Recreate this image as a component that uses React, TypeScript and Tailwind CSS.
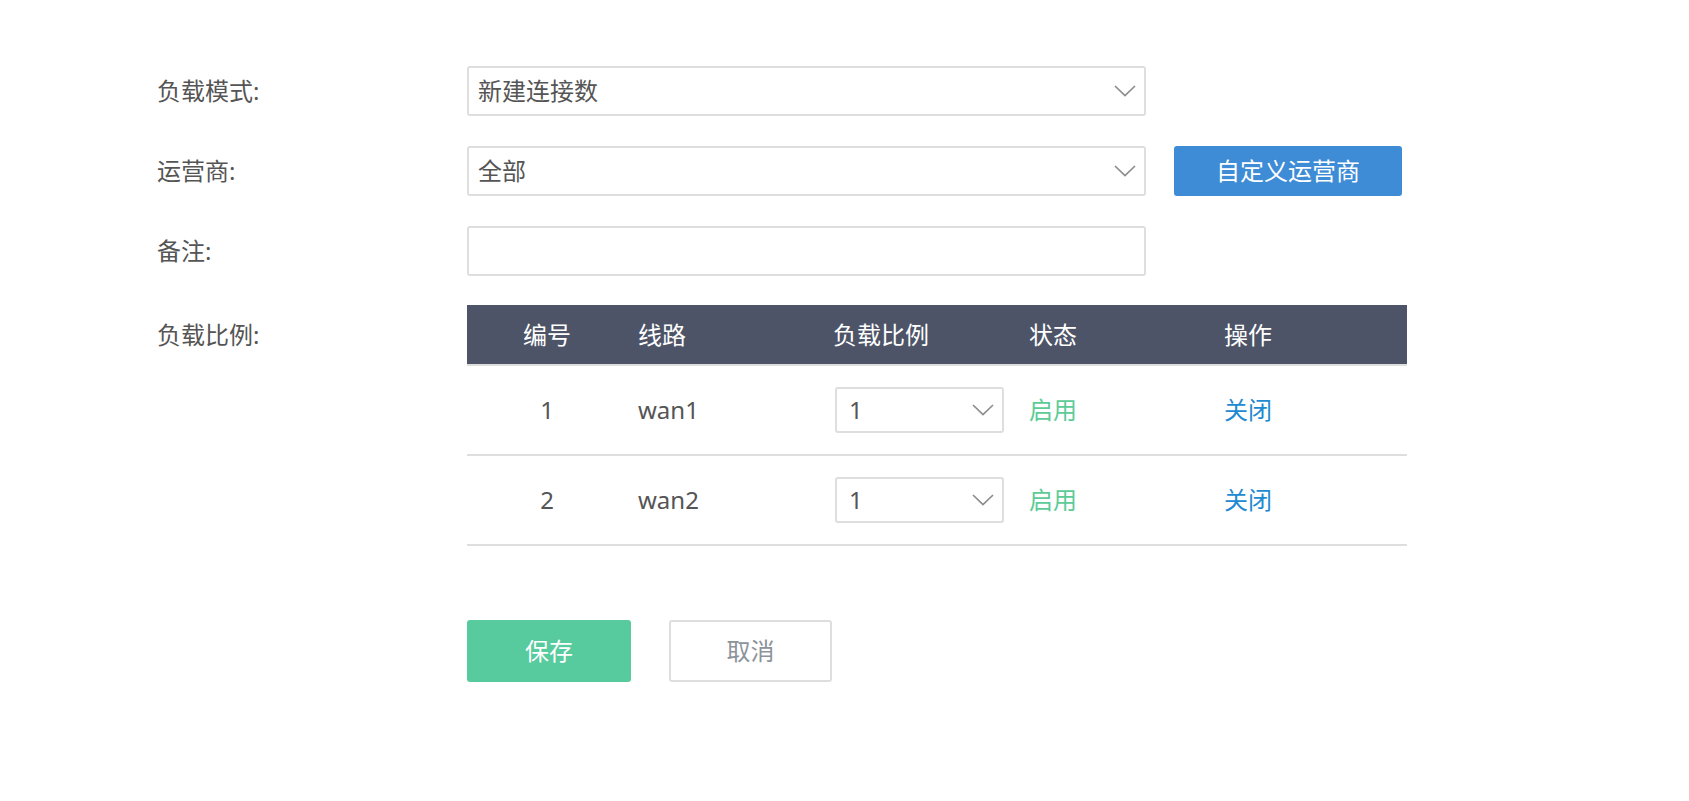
import React from "react";

const font = { fontFamily: '"Noto Sans", "Noto Sans CJK SC", sans-serif' };

function Chevron() {
  return (
    <svg width="22" height="12" viewBox="0 0 22 12" fill="none">
      <polyline points="1,1 11,10.5 21,1" stroke="#8c8c8c" strokeWidth="1.7" />
    </svg>
  );
}

function SelectBox({ value }: { value: string }) {
  return (
    <div className="flex h-[50px] w-[679px] items-center justify-between rounded-[3px] border-2 border-[#dedede] bg-white pl-[9px] pr-[8px] text-[24px] text-[#555555]">
      <span>{value}</span>
      <Chevron />
    </div>
  );
}

function Label({ text, h }: { text: string; h: string }) {
  return (
    <div className={`flex w-[310px] shrink-0 items-center text-[24px] text-[#555555] ${h}`}>{text}</div>
  );
}

const rows = [
  { id: "1", line: "wan1" },
  { id: "2", line: "wan2" },
];

export default function App() {
  return (
    <div className="min-h-screen w-full bg-white" style={font}>
      <div className="flex flex-col pl-[157px] pt-[66px]">
        <div className="flex items-center">
          <Label text="负载模式:" h="h-[50px]" />
          <SelectBox value="新建连接数" />
        </div>
        <div className="mt-[30px] flex items-center">
          <Label text="运营商:" h="h-[50px]" />
          <SelectBox value="全部" />
          <button className="ml-[28px] h-[50px] w-[228px] rounded-[3px] bg-[#3e8cd6] text-[24px] text-white">
            自定义运营商
          </button>
        </div>
        <div className="mt-[30px] flex items-center">
          <Label text="备注:" h="h-[50px]" />
          <div className="h-[50px] w-[679px] rounded-[3px] border-2 border-[#dedede] bg-white" />
        </div>
        <div className="mt-[29px] flex items-start">
          <Label text="负载比例:" h="h-[59px]" />
          <div className="w-[940px]">
            <div className="grid h-[59px] grid-cols-[160px_195px_196px_195px_1fr] items-center bg-[#4d5467] text-[24px] text-white">
              <div className="text-center">编号</div>
              <div className="pl-[11px]">线路</div>
              <div className="pl-[11px]">负载比例</div>
              <div className="pl-[11px]">状态</div>
              <div className="pl-[11px]">操作</div>
            </div>
            <div className="h-[2px] bg-[#dedede]" />
            {rows.map((r) => (
              <div key={r.id}>
                <div className="grid h-[88px] grid-cols-[160px_195px_196px_195px_1fr] items-center text-[24px] text-[#555555]">
                  <div className="text-center">{r.id}</div>
                  <div className="pl-[11px]">{r.line}</div>
                  <div className="pl-[13px]">
                    <div className="flex h-[46px] w-[169px] items-center justify-between rounded-[3px] border-2 border-[#dedede] pl-[12px] pr-[8px]">
                      <span>1</span>
                      <Chevron />
                    </div>
                  </div>
                  <div className="pl-[11px] text-[#5ccb97]">启用</div>
                  <div className="pl-[11px] text-[#2189d0]">关闭</div>
                </div>
                <div className="h-[2px] bg-[#dedede]" />
              </div>
            ))}
          </div>
        </div>
        <div className="mt-[74px] flex pl-[310px]">
          <button className="h-[62px] w-[164px] rounded-[3px] bg-[#57cb9e] text-[24px] text-white">保存</button>
          <button className="ml-[38px] h-[62px] w-[163px] rounded-[3px] border-2 border-[#dedede] bg-white text-[24px] text-[#8c939b]">
            取消
          </button>
        </div>
      </div>
    </div>
  );
}
